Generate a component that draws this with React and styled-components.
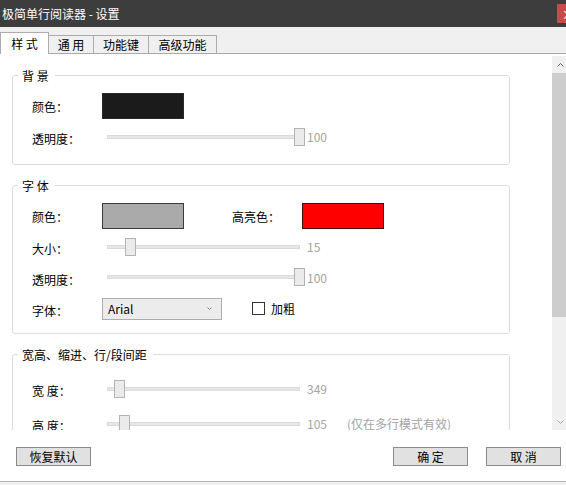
import React from "react";
import styled, { createGlobalStyle } from "styled-components";

const GlobalStyle = createGlobalStyle`
  html, body {
    margin: 0;
    padding: 0;
    background: #f0f0f0;
    overflow: hidden;
  }
  body {
    font-family: "Noto Sans CJK SC", "Microsoft YaHei", sans-serif;
    font-size: 12px;
    color: #000;
  }
`;

const Root = styled.div`
  width: 566px;
  height: 485px;
  overflow: hidden;
`;

const Window = styled.div`
  width: 569px;
`;

const TitleBar = styled.div`
  width: 580px;
  height: 27px;
  box-sizing: border-box;
  padding-left: 2px;
  background: #3d3d3d;
  color: #fff;
  display: flex;
  align-items: center;
`;

const Title = styled.span`
  flex: 1;
  font-size: 12px;
  line-height: 27px;
`;

const CloseButton = styled.div`
  width: 22px;
  height: 19px;
  margin-right: 1px;
  background: #c94a48;
  color: #fff;
  font-size: 13px;
  display: flex;
  align-items: center;
  justify-content: center;
`;

const TabBar = styled.div`
  height: 26px;
  background: #f0f0f0;
  border-bottom: 1px solid #a9a9a9;
  display: flex;
  align-items: flex-end;
`;

const Tab = styled.div`
  position: relative;
  z-index: ${p => (p.$active ? 1 : 0)};
  width: ${p => p.$w}px;
  height: ${p => (p.$active ? 22 : 18)}px;
  margin-bottom: ${p => (p.$active ? -1 : 0)}px;
  margin-left: -1px;
  box-sizing: border-box;
  border: 1px solid #acacac;
  border-bottom: none;
  background: ${p => (p.$active ? "#fff" : "#f0f0f0")};
  display: flex;
  align-items: center;
  justify-content: center;
  white-space: pre;
  font-size: 12px;

  &:first-child {
    margin-left: 0;
  }
`;

const Panel = styled.div`
  display: flex;
  height: 376px;
  background: #fff;
`;

const Scroller = styled.div`
  flex: 1;
  overflow: hidden;
  padding: 13px 0 0 12px;
  display: flex;
  flex-direction: column;
  gap: 12px;
`;

const ScrollBar = styled.div`
  width: 17px;
  margin-top: 2px;
  background: #f0f0f0;
  display: flex;
  flex-direction: column;
`;

const ScrollArrow = styled.div`
  height: 17px;
  flex-shrink: 0;
  display: flex;
  align-items: center;
  justify-content: center;
  color: ${p => p.$color};
`;

const ScrollThumb = styled.div`
  height: 244px;
  background: #cdcdcd;
`;

const ScrollTrack = styled.div`
  flex: 1;
`;

const Group = styled.fieldset`
  width: 498px;
  box-sizing: border-box;
  margin: 0;
  padding: 0;
  min-width: 0;
  border: 1px solid #dcdcdc;
  border-radius: 3px;
  flex-shrink: 0;
`;

const Legend = styled.legend`
  margin-left: 5px;
  padding: 0 6px 0 4px;
  font-size: 12px;
  line-height: 17px;
  white-space: pre;
`;

const GroupBody = styled.div`
  padding: ${p => p.$pt}px 0 ${p => p.$pb}px 19px;
`;

const Row = styled.div`
  display: flex;
  align-items: center;
  height: ${p => p.$h}px;
`;

const Label = styled.span`
  width: 70px;
  flex-shrink: 0;
  margin-left: ${p => p.$ml || 0}px;
  padding-top: ${p => (p.$drop || 0) * 2}px;
  white-space: pre;
`;

const Swatch = styled.div`
  width: 82px;
  height: 26px;
  box-sizing: border-box;
  background: ${p => p.$color};
  border: 1px solid ${p => p.$edge};
`;

const SliderWrap = styled.div`
  position: relative;
  width: 202px;
  height: 18px;
  flex-shrink: 0;
`;

const Track = styled.div`
  position: absolute;
  left: 5px;
  right: 4px;
  top: 7px;
  height: 4px;
  box-sizing: border-box;
  background: #e7e7e7;
  border: 1px solid #dadada;
`;

const Thumb = styled.div`
  position: absolute;
  top: 0;
  width: 11px;
  height: 18px;
  box-sizing: border-box;
  background: #ebebeb;
  border: 1px solid #b3b3b3;
`;

const Value = styled.span`
  margin-left: 3px;
  color: #a3a3a3;
`;

const Hint = styled.span`
  margin-left: 20px;
  color: #a3a3a3;
`;

const Select = styled.div`
  width: 120px;
  height: 22px;
  box-sizing: border-box;
  border: 1px solid #adadad;
  background: #ececec;
  padding: 0 9px 0 5px;
  display: flex;
  align-items: center;
  justify-content: space-between;
  font-size: 12px;
  color: #000;

  svg {
    color: #808080;
  }
`;

const CheckBox = styled.div`
  width: 13px;
  height: 13px;
  box-sizing: border-box;
  margin-left: 30px;
  border: 1px solid #333;
  background: #fff;
`;

const CheckLabel = styled.span`
  margin-left: 6px;
`;

const Footer = styled.div`
  height: 52px;
  box-sizing: border-box;
  padding: 17px 8px 0 16px;
  background: #fff;
  border-bottom: 1px solid #b4b4b4;
  display: flex;
  align-items: flex-start;
`;

const Button = styled.div`
  width: 75px;
  height: 19px;
  box-sizing: border-box;
  margin-left: ${p => (p.$push ? "auto" : `${p.$ml || 0}px`)};
  border: 1px solid #8a8a8a;
  background: #e1e1e1;
  display: flex;
  align-items: center;
  justify-content: center;
  white-space: pre;
  font-size: 12px;
`;

const tabs = [
  { name: "样 式", w: 49, active: true },
  { name: "通 用", w: 46 },
  { name: "功能键", w: 56 },
  { name: "高级功能", w: 69 },
];

function Chevron({ up, size = 7 }) {
  const h = Math.ceil(size / 2);
  const m = size / 2;
  return (
    <svg width={size} height={h} viewBox={`0 0 ${size} ${h}`}>
      <path
        d={
          up
            ? `M0.5 ${h - 0.5} L${m} 0.5 L${size - 0.5} ${h - 0.5}`
            : `M0.5 0.5 L${m} ${h - 0.5} L${size - 0.5} 0.5`
        }
        fill="none"
        stroke="currentColor"
        strokeWidth="1"
      />
    </svg>
  );
}

function Slider({ value, min, max, hint }) {
  const left = Math.round(((value - min) / (max - min)) * 192);
  return (
    <>
      <SliderWrap>
        <Track />
        <Thumb style={{ left }} />
      </SliderWrap>
      <Value>{value}</Value>
      {hint && <Hint>{hint}</Hint>}
    </>
  );
}

export default function App() {
  return (
    <Root>
      <GlobalStyle />
      <Window>
        <TitleBar>
          <Title>极简单行阅读器 - 设置</Title>
          <CloseButton>×</CloseButton>
        </TitleBar>

        <TabBar>
          {tabs.map(t => (
            <Tab key={t.name} $w={t.w} $active={t.active}>
              {t.name}
            </Tab>
          ))}
        </TabBar>

        <Panel>
          <Scroller>
            <Group>
              <Legend>背 景</Legend>
              <GroupBody $pt={6} $pb={12}>
                <Row $h={31}>
                  <Label $drop={1}>颜色：</Label>
                  <Swatch $color="#1b1b1b" $edge="#2a2a2a" />
                </Row>
                <Row $h={31}>
                  <Label $drop={2}>透明度：</Label>
                  <Slider value={100} min={0} max={100} />
                </Row>
              </GroupBody>
            </Group>

            <Group>
              <Legend>字 体</Legend>
              <GroupBody $pt={6} $pb={8}>
                <Row $h={31}>
                  <Label $drop={1}>颜色：</Label>
                  <Swatch $color="#aaaaaa" $edge="#3a3a3a" />
                  <Label $ml={48} $drop={1}>高亮色：</Label>
                  <Swatch $color="#ff0000" $edge="#3d1010" />
                </Row>
                <Row $h={31}>
                  <Label $drop={2}>大小：</Label>
                  <Slider value={15} min={6} max={80} />
                </Row>
                <Row $h={30}>
                  <Label $drop={2}>透明度：</Label>
                  <Slider value={100} min={0} max={100} />
                </Row>
                <Row $h={33}>
                  <Label $drop={2}>字体：</Label>
                  <Select>
                    <span>Arial</span>
                    <Chevron size={5} />
                  </Select>
                  <CheckBox />
                  <CheckLabel>加粗</CheckLabel>
                </Row>
              </GroupBody>
            </Group>

            <Group>
              <Legend>宽高、缩进、行/段间距</Legend>
              <GroupBody $pt={8} $pb={8}>
                <Row $h={35}>
                  <Label $drop={2}>宽 度：</Label>
                  <Slider value={349} min={200} max={2600} />
                </Row>
                <Row $h={35}>
                  <Label $drop={2}>高 度：</Label>
                  <Slider value={105} min={40} max={774} hint="(仅在多行模式有效)" />
                </Row>
              </GroupBody>
            </Group>
          </Scroller>

          <ScrollBar>
            <ScrollArrow $color="#606060">
              <Chevron up />
            </ScrollArrow>
            <ScrollThumb />
            <ScrollTrack />
            <ScrollArrow $color="#a6a6a6">
              <Chevron />
            </ScrollArrow>
          </ScrollBar>
        </Panel>

        <Footer>
          <Button>恢复默认</Button>
          <Button $push>确 定</Button>
          <Button $ml={18}>取 消</Button>
        </Footer>
      </Window>
    </Root>
  );
}
